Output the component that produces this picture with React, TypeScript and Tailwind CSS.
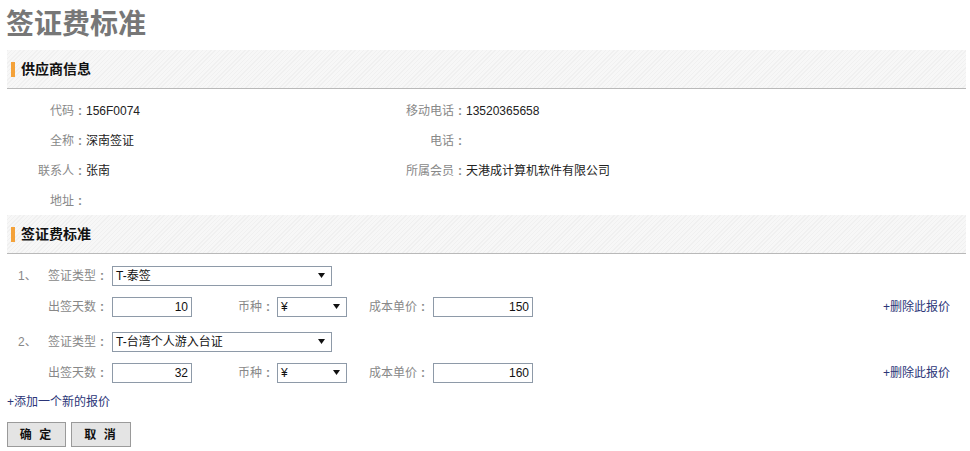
import React from "react";

const Arrow = () => (
  <svg width="7" height="5" viewBox="0 0 7 5" className="shrink-0">
    <polygon points="0,0 7,0 3.5,5" fill="#111" />
  </svg>
);

function Label({ text, w, right }: { text: string; w: string; right?: boolean }) {
  return (
    <span className={`${w} flex items-center text-[#888] ${right ? "justify-end" : ""}`}>
      <span>{text}</span>
      <span className="w-[12px] text-center font-bold">:</span>
    </span>
  );
}

function Band({ title }: { title: string }) {
  return (
    <div className="ml-[7px] w-[959px] h-[39px] border-b border-[#b9b9b9] bg-[repeating-linear-gradient(135deg,#f0f0f0_0px,#f0f0f0_1px,#f7f7f7_1px,#f7f7f7_3px)] flex items-center">
      <span className="ml-[4px] w-[4px] h-[15px] bg-[#f4a23a]" />
      <span className="ml-[6px] text-[14px] font-bold text-[#111] leading-[20px]">{title}</span>
    </div>
  );
}

function InfoRow({ l1, v1, l2, v2 }: { l1: string; v1: string; l2?: string; v2?: string }) {
  return (
    <div className="h-[30px] flex items-center">
      <div className="w-[386px] flex items-center">
        <Label text={l1} w="w-[86px]" right />
        <span className="text-[#222]">{v1}</span>
      </div>
      {l2 ? (
        <div className="flex items-center">
          <Label text={l2} w="w-[80px]" right />
          <span className="text-[#222]">{v2}</span>
        </div>
      ) : null}
    </div>
  );
}

function Select({ w, text }: { w: string; text: string }) {
  return (
    <div className={`${w} h-[20px] border border-[#8e9aa8] bg-white flex items-center justify-between pl-[3px] pr-[6px] text-[#111]`}>
      <span>{text}</span>
      <Arrow />
    </div>
  );
}

function NumInput({ w, value }: { w: string; value: string }) {
  return (
    <div className={`${w} h-[20px] border border-[#8e9aa8] bg-white flex items-center justify-end pr-[3px] text-[#111]`}>
      {value}
    </div>
  );
}

function Entry({ n, type, days, price }: { n: string; type: string; days: string; price: string }) {
  return (
    <div>
      <div className="h-[31px] flex items-center">
        <span className="w-[48px] pl-[18px] text-[#888]">{n}</span>
        <Label text="签证类型" w="w-[60px]" />
        <div className="ml-[4px]">
          <Select w="w-[220px]" text={type} />
        </div>
      </div>
      <div className="h-[31px] flex items-center">
        <span className="w-[48px]" />
        <Label text="出签天数" w="w-[60px]" />
        <div className="ml-[4px]">
          <NumInput w="w-[80px]" value={days} />
        </div>
        <span className="ml-[46px]">
          <Label text="币种" w="w-[36px]" />
        </span>
        <div className="ml-[3px]">
          <Select w="w-[70px]" text="¥" />
        </div>
        <span className="ml-[22px]">
          <Label text="成本单价" w="w-[60px]" />
        </span>
        <div className="ml-[4px]">
          <NumInput w="w-[100px]" value={price} />
        </div>
        <span className="ml-auto mr-[20px] text-[#2b3578]">+删除此报价</span>
      </div>
    </div>
  );
}

export default function App() {
  return (
    <div className="w-[970px] h-[451px] bg-white text-[12px] leading-[16px] font-['Liberation_Sans','Noto_Sans_CJK_SC',sans-serif] text-[#222] overflow-hidden">
      <h1 className="pl-[6px] h-[44px] leading-[44px] text-[28px] font-bold text-[#777] font-['Noto_Sans_CJK_SC',sans-serif]">
        签证费标准
      </h1>
      <div className="mt-[6px]">
        <Band title="供应商信息" />
      </div>
      <div className="pt-[7px]">
        <InfoRow l1="代码" v1="156F0074" l2="移动电话" v2="13520365658" />
        <InfoRow l1="全称" v1="深南签证" l2="电话" v2="" />
        <InfoRow l1="联系人" v1="张南" l2="所属会员" v2="天港成计算机软件有限公司" />
        <InfoRow l1="地址" v1="" />
      </div>
      <div className="-mt-[1px]">
        <Band title="签证费标准" />
      </div>
      <div className="pt-[6px]">
        <Entry n="1、" type="T-泰签" days="10" price="150" />
        <div className="mt-[4px]">
          <Entry n="2、" type="T-台湾个人游入台证" days="32" price="160" />
        </div>
      </div>
      <div className="h-[28px] flex items-center pl-[7px] text-[#2b3578]">+添加一个新的报价</div>
      <div className="mt-[6px] pl-[7px] flex gap-[5px]">
        <button className="w-[59px] h-[25px] border border-[#9a9a9a] bg-[#e4e4e4] font-bold text-[#111] text-[12px] tracking-[2px]">确 定</button>
        <button className="w-[60px] h-[25px] border border-[#9a9a9a] bg-[#e4e4e4] font-bold text-[#111] text-[12px] tracking-[2px]">取 消</button>
      </div>
    </div>
  );
}
